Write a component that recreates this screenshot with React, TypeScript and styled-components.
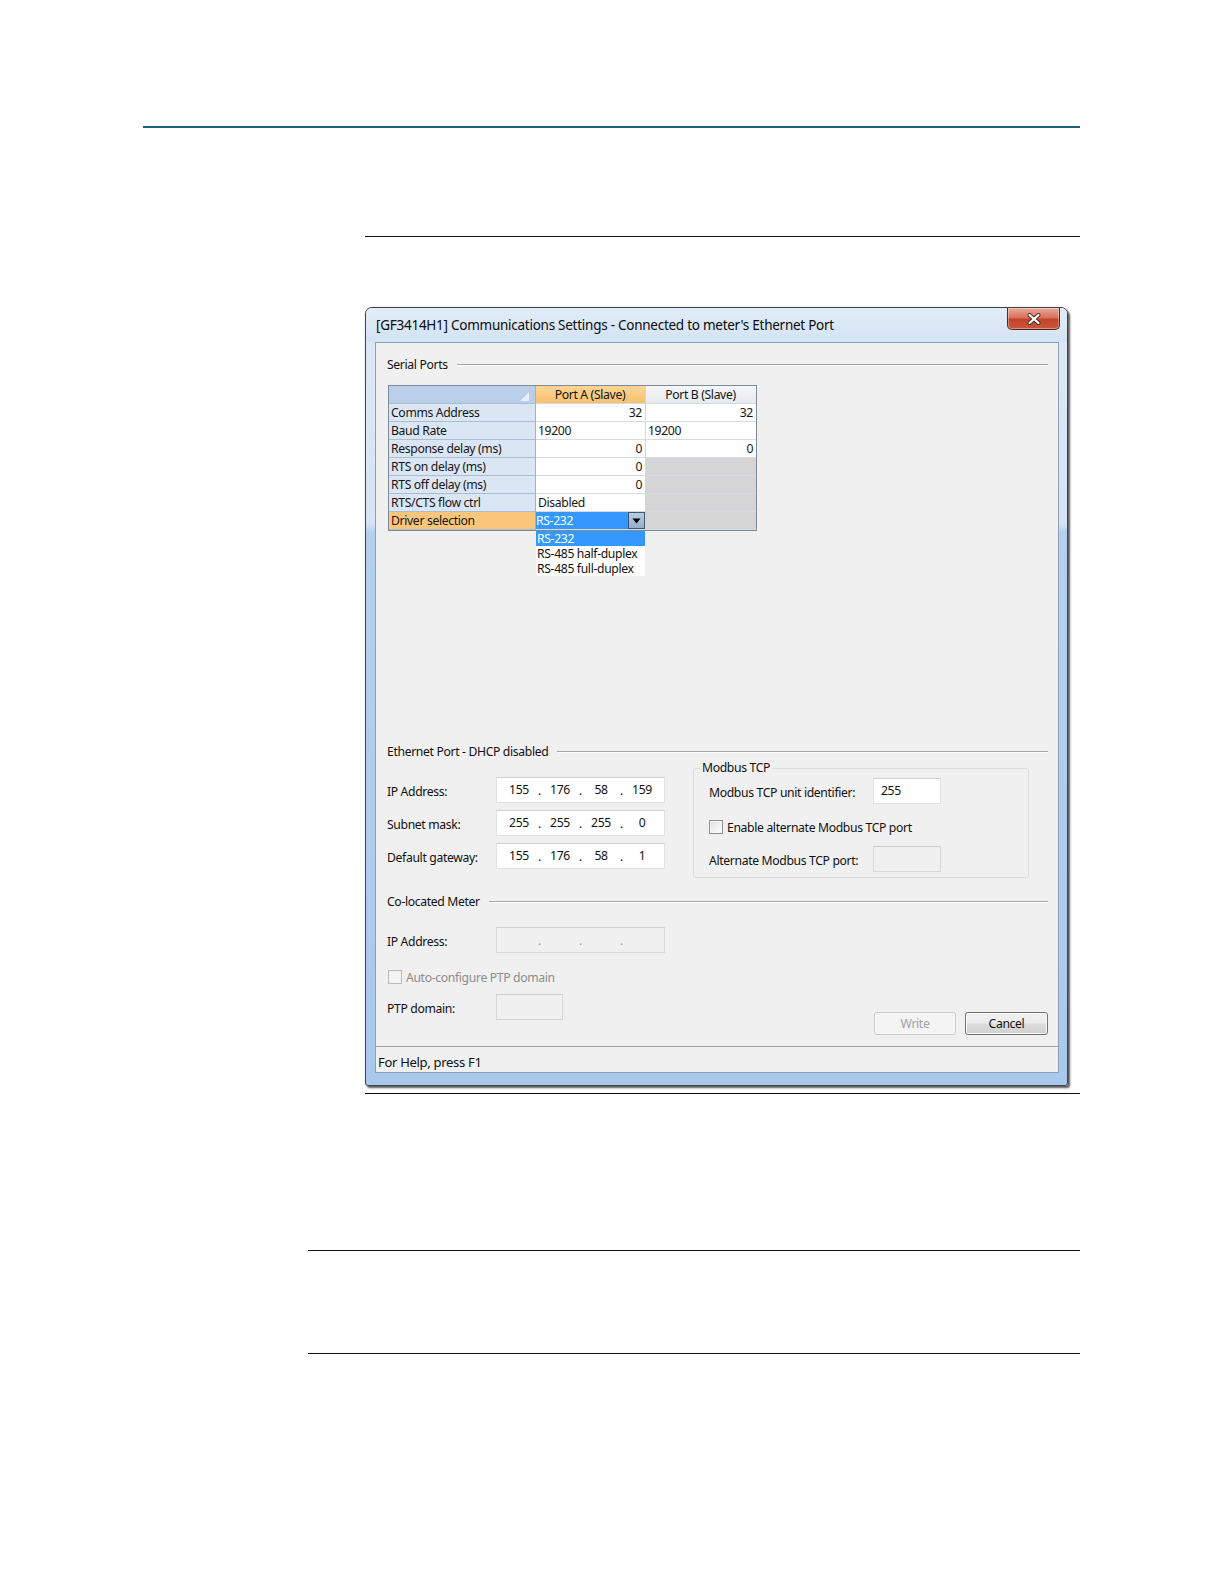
import React from "react";
import styled, { createGlobalStyle } from "styled-components";

const GlobalStyle = createGlobalStyle`
  html, body { margin: 0; padding: 0; background: #ffffff; }
  body { font-family: "Noto Sans", "DejaVu Sans", sans-serif; color: #000; }
  * { box-sizing: border-box; }
`;

const Page = styled.div`
  width: 1224px;
  min-height: 1584px;
  padding-top: 126px;
  display: flex;
  flex-direction: column;
`;

const TopRule = styled.div`
  margin-left: 143px;
  width: 937px;
  height: 2px;
  background: #1e5f7f;
`;

const Rule = styled.div<{ $top: number; $left: number }>`
  margin-top: ${(p) => p.$top}px;
  margin-left: ${(p) => p.$left}px;
  width: ${(p) => 1080 - p.$left}px;
  height: 1px;
  background: #111;
`;

const Window = styled.div`
  margin-top: 70px;
  margin-left: 365px;
  width: 703px;
  height: 779px;
  border: 1px solid #3c444d;
  border-radius: 7px 7px 3px 3px;
  background: linear-gradient(
    to bottom,
    #dce8f5 0px,
    #d6e4f4 215px,
    #b4d0ee 225px,
    #a9c9ec 100%
  );
  box-shadow: 2px 2px 2px rgba(40, 40, 40, 0.75), 0 0 1px rgba(0, 0, 0, 0.4);
  display: flex;
  flex-direction: column;
  font-size: 12.2px;
  letter-spacing: -0.35px;
`;

const TitleBar = styled.div`
  height: 34px;
  display: flex;
  align-items: flex-start;
  justify-content: space-between;
  padding-left: 10px;
  padding-right: 7px;
  border-radius: 6px 6px 0 0;
  background: linear-gradient(to bottom, #e2ecf7, #d3e3f4);
`;

const TitleText = styled.div`
  margin-top: 8px;
  font-size: 13.5px;
  line-height: 18px;
  letter-spacing: -0.26px;
  color: #0b0b0b;
`;

const CloseButton = styled.div`
  width: 53px;
  height: 22px;
  border: 1px solid #5a2519;
  border-top: none;
  border-radius: 0 0 5px 5px;
  background: linear-gradient(to bottom, #e9a999 0%, #d8745e 45%, #c2432a 55%, #c9583c 100%);
  display: flex;
  align-items: center;
  justify-content: center;
  box-shadow: inset 0 0 0 1px rgba(255, 255, 255, 0.35);
`;

const FrameBody = styled.div`
  flex: 1;
  display: flex;
  padding: 0 8px 12px 9px;
`;

const Client = styled.div`
  width: 684px;
  height: 731px;
  background: #f0f0f0;
  border: 1px solid #8aa0b7;
  display: flex;
  flex-direction: column;
`;

const Main = styled.div`
  flex: 1;
  padding: 0 10px 0 11px;
  display: flex;
  flex-direction: column;
`;

const GroupHeader = styled.div<{ $top: number }>`
  margin-top: ${(p) => p.$top}px;
  height: 16px;
  display: flex;
  align-items: center;
  gap: 9px;
  color: #111;
  white-space: nowrap;
  &::after {
    content: "";
    flex: 1;
    height: 1px;
    background: #a7a7a7;
    box-shadow: 0 1px 0 #ffffff;
  }
`;

const SerialBody = styled.div`
  margin-top: 13px;
  margin-left: 1px;
  height: 358px;
  position: relative;
`;

const Grid = styled.div`
  width: 369px;
  display: grid;
  grid-template-columns: 147px 110px 110px;
  grid-auto-rows: 18px;
  border: 1px solid #7d8a98;
`;

type CellKind = "corner" | "headA" | "headB" | "rowHead" | "rowHeadSel" | "data" | "disabled" | "select";

const cellBg: Record<CellKind, string> = {
  corner: "#b9cfe9",
  headA: "linear-gradient(to bottom, #fcd596, #f7c16f)",
  headB: "linear-gradient(to bottom, #f6f7f9, #e6e9ee)",
  rowHead: "#dbe6f4",
  rowHeadSel: "#f9c67c",
  data: "#ffffff",
  disabled: "#d5d5d5",
  select: "#ffffff",
};

const Cell = styled.div<{ $kind: CellKind; $align?: "left" | "right" | "center" }>`
  position: relative;
  background: ${(p) => cellBg[p.$kind]};
  border-right: 1px solid
    ${(p) => (p.$kind === "rowHead" || p.$kind === "rowHeadSel" || p.$kind === "corner" ? "#9fb4cc" : "#d2d8e0")};
  border-bottom: 1px solid
    ${(p) => (p.$kind === "rowHead" || p.$kind === "rowHeadSel" || p.$kind === "corner" ? "#aabdd3" : "#d6dbe2")};
  display: flex;
  align-items: center;
  justify-content: ${(p) => (p.$align === "right" ? "flex-end" : p.$align === "center" ? "center" : "flex-start")};
  padding: ${(p) => (p.$kind === "select" ? "0" : "0 3px 0 2px")};
  line-height: 17px;
  white-space: nowrap;
  color: #151515;
  &:nth-child(3n) {
    border-right: none;
  }
`;

const SelectValue = styled.div`
  flex: 1;
  height: 17px;
  background: #3399ff;
  color: #ffffff;
  line-height: 17px;
`;

const SelectButton = styled.div`
  width: 17px;
  height: 17px;
  background: linear-gradient(to bottom, #b9cde2, #93aecb);
  border: 1px solid #3f5670;
  display: flex;
  align-items: center;
  justify-content: center;
`;

const CornerMark = styled.svg`
  position: absolute;
  right: 6px;
  bottom: 2px;
`;

const DropList = styled.div`
  position: absolute;
  left: 148px;
  top: 146px;
  width: 109px;
  background: #ffffff;
  display: flex;
  flex-direction: column;
`;

const DropItem = styled.div<{ $selected?: boolean }>`
  height: 15px;
  line-height: 15px;
  padding-left: 1px;
  background: ${(p) => (p.$selected ? "#3399ff" : "#ffffff")};
  color: ${(p) => (p.$selected ? "#ffffff" : "#111")};
  white-space: nowrap;
`;

const EthernetBody = styled.div`
  display: flex;
  align-items: flex-start;
`;

const FieldColumn = styled.div`
  width: 305px;
  padding-top: 18px;
  display: flex;
  flex-direction: column;
  gap: 7px;
`;

const FieldRow = styled.div<{ $top?: number }>`
  margin-top: ${(p) => p.$top ?? 0}px;
  display: flex;
  align-items: center;
`;

const FieldLabel = styled.div<{ $width: number; $disabled?: boolean }>`
  width: ${(p) => p.$width}px;
  color: ${(p) => (p.$disabled ? "#8d8d8d" : "#111")};
  white-space: nowrap;
  padding-top: 2px;
`;

const IpBox = styled.div<{ $disabled?: boolean }>`
  width: 169px;
  height: 26px;
  background: ${(p) => (p.$disabled ? "#f0f0f0" : "#ffffff")};
  border: 1px solid ${(p) => (p.$disabled ? "#dadada" : "#e2e2e2")};
  border-top-color: ${(p) => (p.$disabled ? "#d2d2d2" : "#cfcfcf")};
  display: grid;
  grid-template-columns: 32px 9px 32px 9px 32px 9px 32px;
  padding-left: 6px;
  align-items: center;
  color: ${(p) => (p.$disabled ? "#9a9a9a" : "#111")};
`;

const Octet = styled.span`
  text-align: center;
  margin-top: -1px;
`;

const Dot = styled.span`
  text-align: center;
  margin-top: 1px;
`;

const TextBox = styled.div<{ $width: number; $disabled?: boolean }>`
  width: ${(p) => p.$width}px;
  height: 26px;
  background: ${(p) => (p.$disabled ? "#f0f0f0" : "#ffffff")};
  border: 1px solid ${(p) => (p.$disabled ? "#d6d6d6" : "#e2e2e2")};
  border-top-color: ${(p) => (p.$disabled ? "#cdcdcd" : "#cfcfcf")};
  padding: 3px 0 0 7px;
  line-height: 17px;
  color: #111;
`;

const ModbusGroup = styled.fieldset`
  margin: 1px 0 0 1px;
  padding: 2px 0 0 15px;
  width: 336px;
  height: 118px;
  border: 1px solid #dcdcdc;
  border-radius: 3px;
  display: flex;
  flex-direction: column;
  gap: 7px;
  min-width: 0;
`;

const Legend = styled.legend`
  padding: 0 2px;
  margin-left: -9px;
  line-height: 16px;
  color: #111;
`;

const CheckRow = styled.div<{ $top: number; $left?: number }>`
  margin-top: ${(p) => p.$top}px;
  margin-left: ${(p) => p.$left ?? 0}px;
  display: flex;
  align-items: center;
  gap: 4px;
  height: 14px;
`;

const CheckBox = styled.div<{ $disabled?: boolean }>`
  width: 14px;
  height: 14px;
  border: 1px solid ${(p) => (p.$disabled ? "#bcbcbc" : "#8f8f8f")};
  background: ${(p) =>
    p.$disabled ? "#f4f4f4" : "linear-gradient(135deg, #dcdcdc 0%, #f3f3f3 60%, #ffffff 100%)"};
  box-shadow: inset 0 0 0 1px ${(p) => (p.$disabled ? "#f0f0f0" : "#f7f7f7")};
`;

const CheckText = styled.span<{ $disabled?: boolean }>`
  color: ${(p) => (p.$disabled ? "#8d8d8d" : "#111")};
  white-space: nowrap;
`;

const BottomRow = styled.div`
  margin-top: 10px;
  display: flex;
  align-items: flex-start;
  justify-content: space-between;
`;

const ButtonBar = styled.div`
  margin-top: 18px;
  display: flex;
  gap: 9px;
`;

const Button = styled.div<{ $disabled?: boolean }>`
  width: ${(p) => (p.$disabled ? 82 : 83)}px;
  height: 23px;
  border-radius: 3px;
  border: 1px solid ${(p) => (p.$disabled ? "#c9c9c9" : "#707070")};
  background: ${(p) =>
    p.$disabled
      ? "#f4f4f4"
      : "linear-gradient(to bottom, #f3f3f3 0%, #ebebeb 48%, #dddddd 52%, #cfcfcf 100%)"};
  box-shadow: inset 0 0 0 1px ${(p) => (p.$disabled ? "#fbfbfb" : "#fcfcfc")};
  color: ${(p) => (p.$disabled ? "#a3a3a3" : "#111")};
  display: flex;
  align-items: center;
  justify-content: center;
`;

const StatusBar = styled.div`
  height: 26px;
  border-top: 1px solid #a0a0a0;
  padding: 4px 0 0 2px;
  display: flex;
  align-items: center;
  font-size: 13px;
  letter-spacing: -0.3px;
  color: #111;
  background: #f0f0f0;
`;

type Row = { label: string; a: string; aAlign: "left" | "right"; b: string | null; bAlign: "left" | "right" };

const rows: Row[] = [
  { label: "Comms Address", a: "32", aAlign: "right", b: "32", bAlign: "right" },
  { label: "Baud Rate", a: "19200", aAlign: "left", b: "19200", bAlign: "left" },
  { label: "Response delay (ms)", a: "0", aAlign: "right", b: "0", bAlign: "right" },
  { label: "RTS on delay (ms)", a: "0", aAlign: "right", b: null, bAlign: "right" },
  { label: "RTS off delay (ms)", a: "0", aAlign: "right", b: null, bAlign: "right" },
  { label: "RTS/CTS flow ctrl", a: "Disabled", aAlign: "left", b: null, bAlign: "left" },
];

const IpField: React.FC<{ octets?: string[]; disabled?: boolean }> = ({ octets, disabled }) => {
  const o = octets ?? ["", "", "", ""];
  return (
    <IpBox $disabled={disabled}>
      <Octet>{o[0]}</Octet>
      <Dot>.</Dot>
      <Octet>{o[1]}</Octet>
      <Dot>.</Dot>
      <Octet>{o[2]}</Octet>
      <Dot>.</Dot>
      <Octet>{o[3]}</Octet>
    </IpBox>
  );
};

export default function App() {
  return (
    <>
      <GlobalStyle />
      <Page>
        <TopRule />
        <Rule $top={108} $left={365} />
        <Window>
          <TitleBar>
            <TitleText>[GF3414H1] Communications Settings - Connected to meter's Ethernet Port</TitleText>
            <CloseButton>
              <svg width="14" height="12" viewBox="0 0 14 12">
                <path d="M2.5 2 L11.5 10 M11.5 2 L2.5 10" stroke="#4a2a22" strokeWidth="4" strokeLinecap="round" />
                <path d="M2.5 2 L11.5 10 M11.5 2 L2.5 10" stroke="#ffffff" strokeWidth="2.2" strokeLinecap="round" />
              </svg>
            </CloseButton>
          </TitleBar>
          <FrameBody>
            <Client>
              <Main>
                <GroupHeader $top={13}>Serial Ports</GroupHeader>
                <SerialBody>
                  <Grid>
                    <Cell $kind="corner">
                      <CornerMark width="9" height="9" viewBox="0 0 9 9">
                        <path d="M0 9 L9 0 L9 9 Z" fill="#e8eff8" />
                      </CornerMark>
                    </Cell>
                    <Cell $kind="headA" $align="center">Port A (Slave)</Cell>
                    <Cell $kind="headB" $align="center">Port B (Slave)</Cell>
                    {rows.map((r) => (
                      <React.Fragment key={r.label}>
                        <Cell $kind="rowHead">{r.label}</Cell>
                        <Cell $kind="data" $align={r.aAlign}>{r.a}</Cell>
                        {r.b === null ? (
                          <Cell $kind="disabled" />
                        ) : (
                          <Cell $kind="data" $align={r.bAlign}>{r.b}</Cell>
                        )}
                      </React.Fragment>
                    ))}
                    <Cell $kind="rowHeadSel">Driver selection</Cell>
                    <Cell $kind="select">
                      <SelectValue>RS-232</SelectValue>
                      <SelectButton>
                        <svg width="9" height="6" viewBox="0 0 9 6">
                          <path d="M0.5 0.5 L8.5 0.5 L4.5 5.5 Z" fill="#000" />
                        </svg>
                      </SelectButton>
                    </Cell>
                    <Cell $kind="disabled" />
                  </Grid>
                  <DropList>
                    <DropItem $selected>RS-232</DropItem>
                    <DropItem>RS-485 half-duplex</DropItem>
                    <DropItem>RS-485 full-duplex</DropItem>
                  </DropList>
                </SerialBody>
                <GroupHeader $top={0}>Ethernet Port - DHCP disabled</GroupHeader>
                <EthernetBody>
                  <FieldColumn>
                    <FieldRow>
                      <FieldLabel $width={109}>IP Address:</FieldLabel>
                      <IpField octets={["155", "176", "58", "159"]} />
                    </FieldRow>
                    <FieldRow>
                      <FieldLabel $width={109}>Subnet mask:</FieldLabel>
                      <IpField octets={["255", "255", "255", "0"]} />
                    </FieldRow>
                    <FieldRow>
                      <FieldLabel $width={109}>Default gateway:</FieldLabel>
                      <IpField octets={["155", "176", "58", "1"]} />
                    </FieldRow>
                  </FieldColumn>
                  <ModbusGroup>
                    <Legend>Modbus TCP</Legend>
                    <FieldRow>
                      <FieldLabel $width={164}>Modbus TCP unit identifier:</FieldLabel>
                      <TextBox $width={68}>255</TextBox>
                    </FieldRow>
                    <CheckRow $top={9}>
                      <CheckBox />
                      <CheckText>Enable alternate Modbus TCP port</CheckText>
                    </CheckRow>
                    <FieldRow $top={5}>
                      <FieldLabel $width={164}>Alternate Modbus TCP port:</FieldLabel>
                      <TextBox $width={68} $disabled />
                    </FieldRow>
                  </ModbusGroup>
                </EthernetBody>
                <GroupHeader $top={15}>Co-located Meter</GroupHeader>
                <FieldRow $top={18}>
                  <FieldLabel $width={109}>IP Address:</FieldLabel>
                  <IpField disabled />
                </FieldRow>
                <CheckRow $top={17} $left={1}>
                  <CheckBox $disabled />
                  <CheckText $disabled>Auto-configure PTP domain</CheckText>
                </CheckRow>
                <BottomRow>
                  <FieldRow>
                    <FieldLabel $width={109}>PTP domain:</FieldLabel>
                    <TextBox $width={67} $disabled />
                  </FieldRow>
                  <ButtonBar>
                    <Button $disabled>Write</Button>
                    <Button>Cancel</Button>
                  </ButtonBar>
                </BottomRow>
              </Main>
              <StatusBar>For Help, press F1</StatusBar>
            </Client>
          </FrameBody>
        </Window>
        <Rule $top={7} $left={365} />
        <Rule $top={156} $left={308} />
        <Rule $top={102} $left={308} />
      </Page>
    </>
  );
}
